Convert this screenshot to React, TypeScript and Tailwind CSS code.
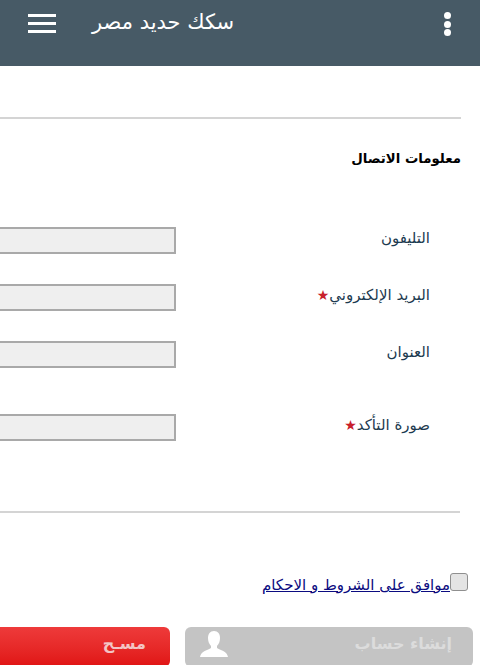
const fields = [
  { label: 'التليفون', required: false, gap: 'mt-[30px]' },
  { label: 'البريد الإلكتروني', required: true, gap: 'mt-[30px]' },
  { label: 'العنوان', required: false, gap: 'mt-[30px]' },
  { label: 'صورة التأكد', required: true, gap: 'mt-[46px]' },
];

export default function App() {
  return (
    <div className="h-[665px] w-[480px] overflow-hidden bg-white font-['DejaVu_Sans',sans-serif]">
      <header className="flex h-[66px] items-start bg-[#475a66] pl-[28px] pr-[29px] pt-[14px] text-white">
        <div className="flex h-[19px] w-[28px] flex-col justify-between">
          <span className="h-[3px] bg-white" />
          <span className="h-[3px] bg-white" />
          <span className="h-[3px] bg-white" />
        </div>
        <h1 className="ml-[36px] mt-[-7px] text-[21px] leading-[30px]">سكك حديد مصر</h1>
        <div className="ml-auto mt-[-2px] flex h-[24px] flex-col justify-between">
          <span className="h-[7px] w-[7px] rounded-full bg-white" />
          <span className="h-[7px] w-[7px] rounded-full bg-white" />
          <span className="h-[7px] w-[7px] rounded-full bg-white" />
        </div>
      </header>

      <main dir="rtl">
        <hr className="mr-[19px] mt-[51px] h-[2px] border-0 bg-[#d4d4d4]" />
        <h2 className="mr-[19px] mt-[30px] text-[13.3px] font-bold leading-[20px] text-black">معلومات الاتصال</h2>

        <div className="mt-[58px]">
          {fields.map((f, i) => (
            <div key={f.label} className={`flex h-[27px] items-start ${i === 0 ? 'mt-[31px]' : f.gap}`}>
              <label className="mt-[1px] w-[304px] shrink-0 pr-[50px] text-[15px] leading-[20px] text-[#1c3a50]">
                {f.label}
                {f.required && <span className="text-[14px] leading-[0] text-[#c8202c]">★</span>}
              </label>
              <input
                type="text"
                className="h-[27px] w-[200px] shrink-0 border-2 border-[#a9a9a9] bg-[#efefef]"
              />
            </div>
          ))}
        </div>

        <hr className="mr-[20px] mt-[70px] h-[2px] border-0 bg-[#d4d4d4]" />

        <div className="mr-[12px] mt-[60px] flex items-start">
          <input
            type="checkbox"
            className="h-[18px] w-[18px] appearance-none rounded-[3px] border border-[#8f8f8f] bg-[#e4e4e4]"
          />
          <a href="#" className="mt-[2px] text-[15px] leading-[20px] text-[#0b0b80] underline">
            موافق على الشروط و الاحكام
          </a>
        </div>

        <div className="mr-[7px] mt-[32px] flex gap-[15px]">
          <button className="flex h-[40px] w-[288px] shrink-0 items-center justify-between rounded-[6px] bg-[#c4c4c4] pb-[6px] pl-[14px] pr-[21px] text-[16px] font-bold text-[#dcdcdc]">
            <span>إنشاء حساب</span>
            <svg width="30" height="28" viewBox="0 0 30 28" fill="#ffffff">
              <path d="M15 1c4 0 6 3 6 7 0 3-1 6-3 8v2c3 2 10 3 11 9H1c1-6 8-7 11-9v-2c-2-2-3-5-3-8 0-4 2-7 6-7z" />
            </svg>
          </button>
          <button className="flex h-[40px] w-[200px] shrink-0 items-center rounded-[6px] bg-gradient-to-b from-[#ee3a3a] to-[#e01212] pb-[6px] pr-[24px] text-[16px] font-bold text-[#f3c4c4]">
            مسـح
          </button>
        </div>
      </main>
    </div>
  );
}
